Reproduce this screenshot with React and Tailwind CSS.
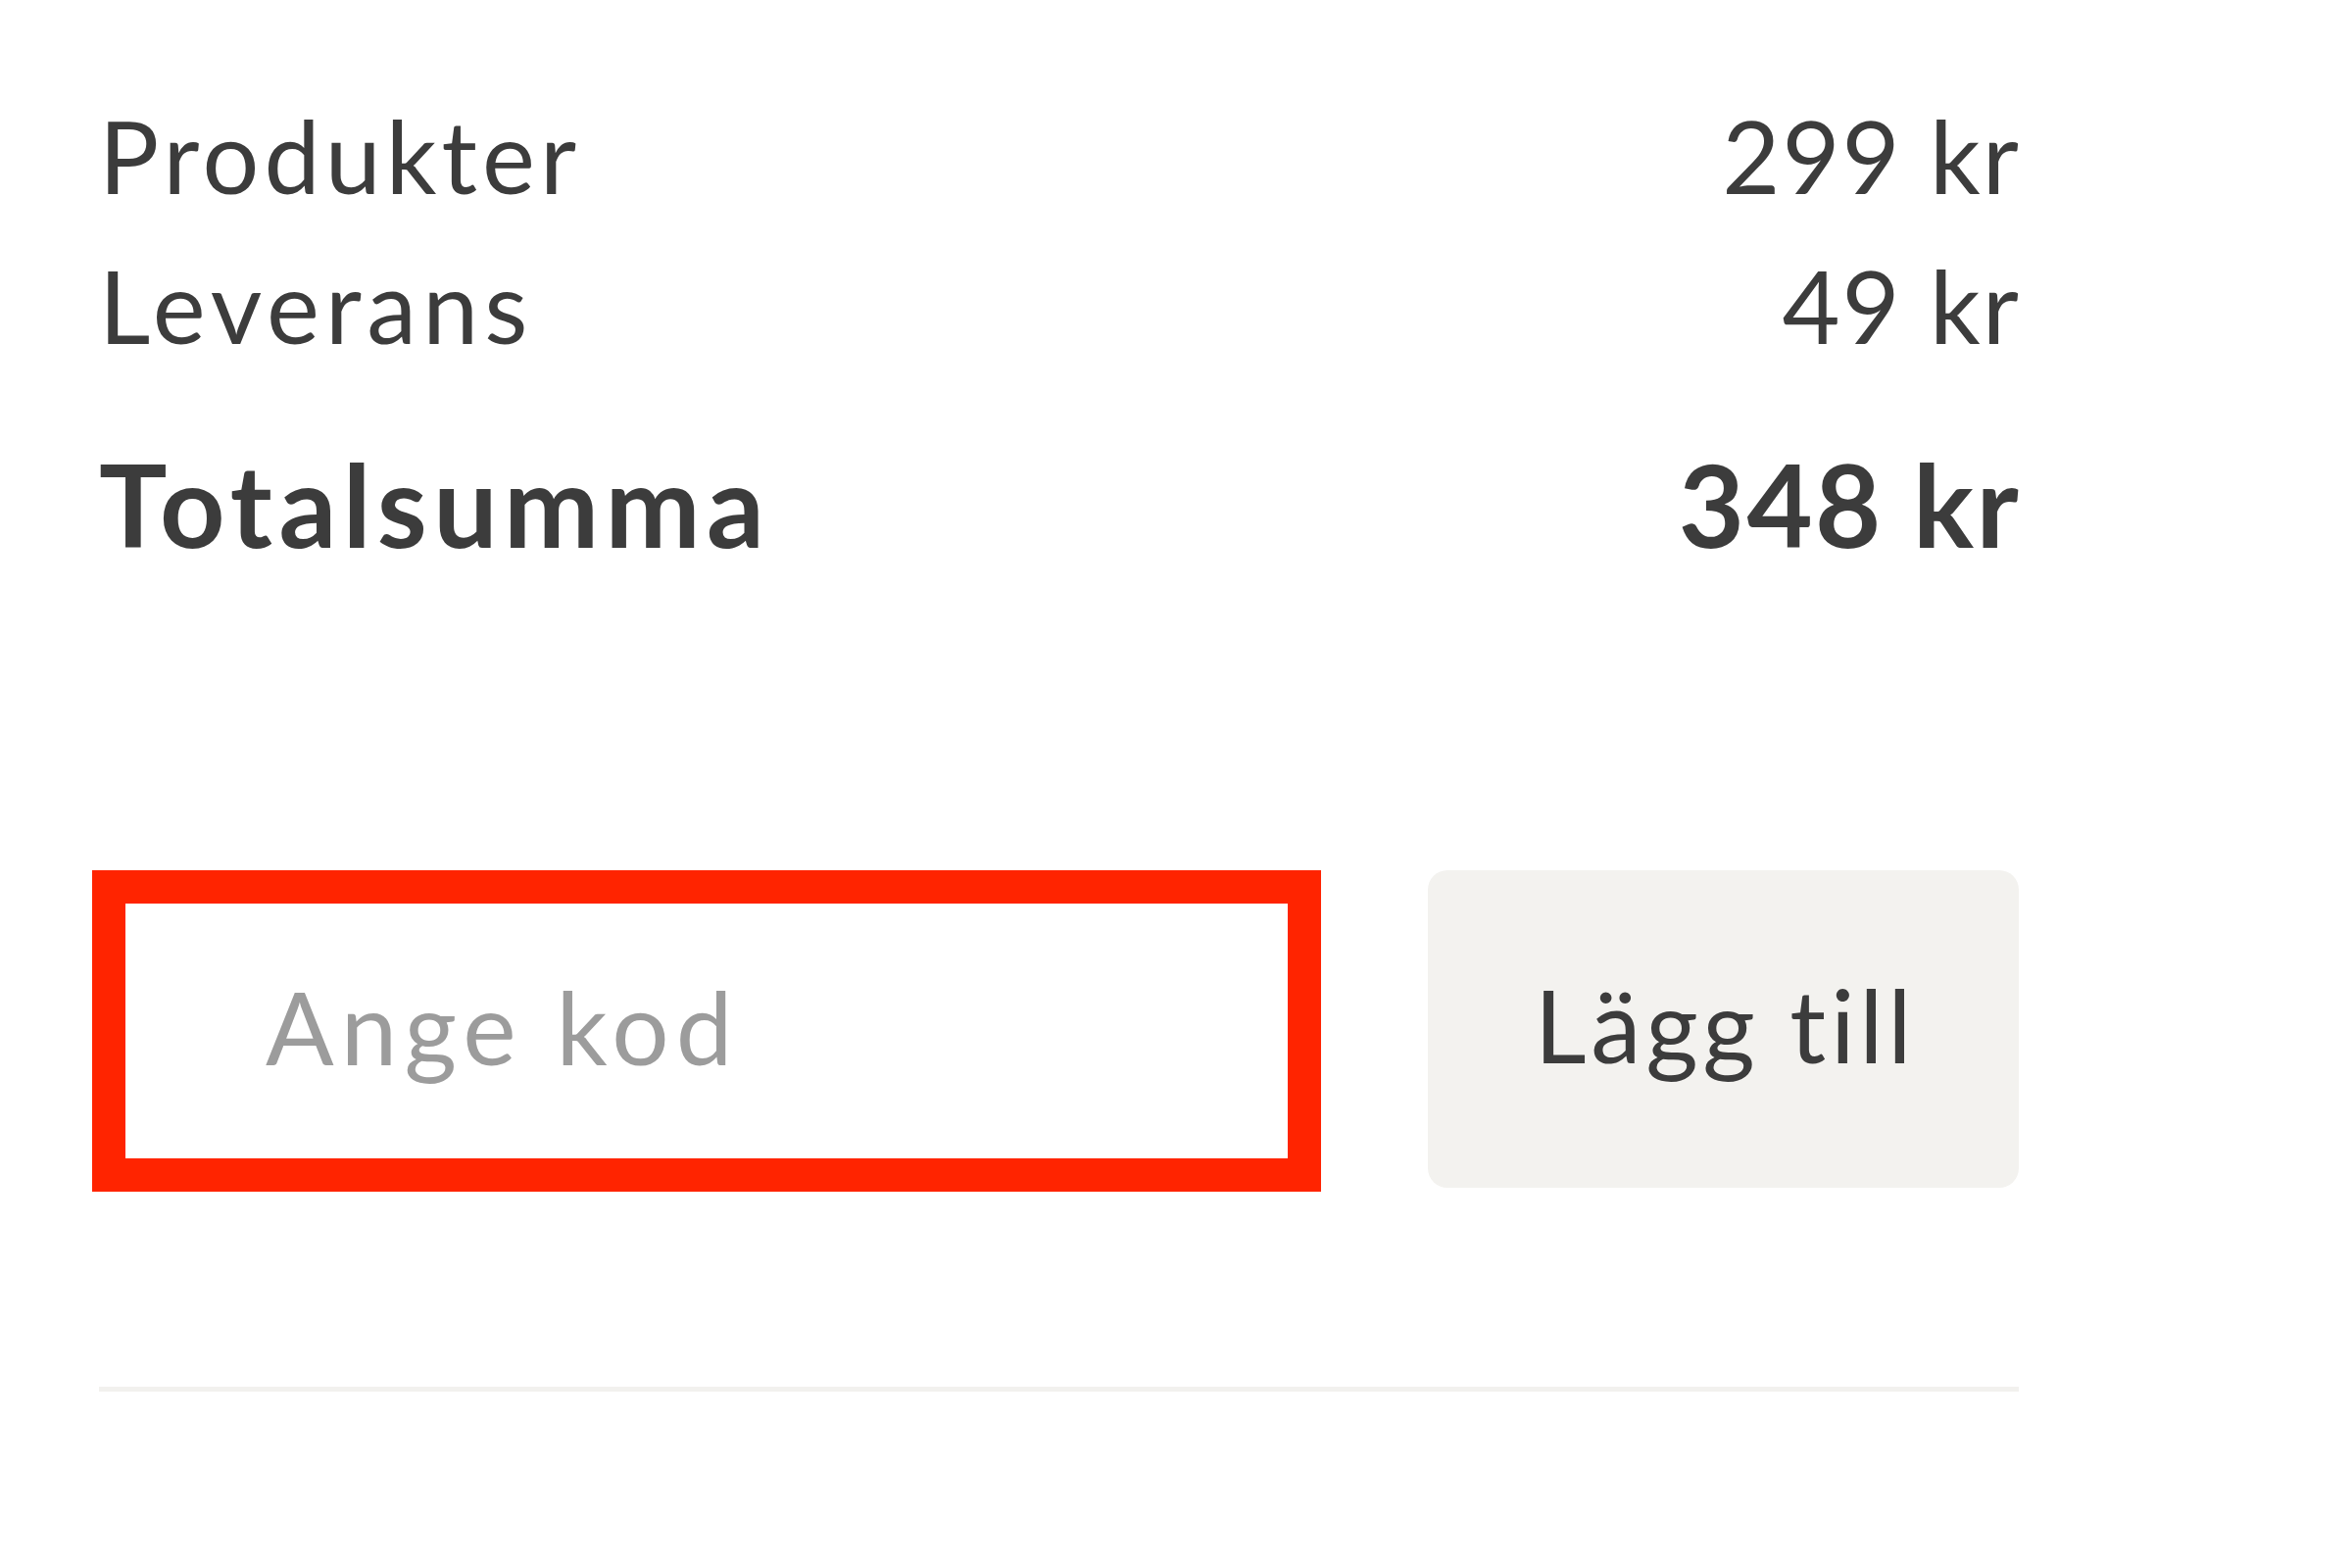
import React, { useState } from 'react';

const rows = [
  { label: 'Produkter', value: '299 kr', track: 'tracking-[0.05em]' },
  { label: 'Leverans', value: '49 kr', track: 'tracking-[0.06em]' },
];

const App = () => {
  const [code, setCode] = useState('');

  return (
    <div className="min-h-[1600px] w-full bg-white font-['Lato','Noto_Sans',sans-serif] text-[#3c3c3c]">
      <div className="ml-[101px] w-[1959px] pt-[82px]">
        {rows.map((row) => (
          <div key={row.label} className="flex justify-between text-[102px] leading-[153px]">
            <span className={row.track}>{row.label}</span>
            <span className="-mr-[2px] tracking-[0.02em]">{row.value}</span>
          </div>
        ))}

        <div className="mt-[50px] flex justify-between text-[116px] font-bold leading-[153px]">
          <span className="tracking-[0.055em]">Totalsumma</span>
          <span className="-mr-[2px] tracking-[0.02em]">348 kr</span>
        </div>

        <div className="-ml-[7px] mt-[297px] flex items-start justify-between">
          <input
            value={code}
            onChange={(e) => setCode(e.target.value)}
            placeholder="Ange kod"
            className="h-[328px] w-[1254px] border-[34px] border-[#ff2400] bg-white pb-[10px] pl-[143px] text-[103px] tracking-[0.07em] text-[#3c3c3c] outline-none placeholder:text-[#9c9c9c]"
          />
          <button className="h-[324px] w-[603px] rounded-[20px] bg-[#f3f2ef] pb-[10px] pl-[4px] text-[103px] tracking-[0.045em] text-[#3c3c3c]">
            Lägg till
          </button>
        </div>

        <div className="mt-[199px] h-[5px] bg-[#f2f1ee]"></div>
      </div>
    </div>
  );
};

export default App;
